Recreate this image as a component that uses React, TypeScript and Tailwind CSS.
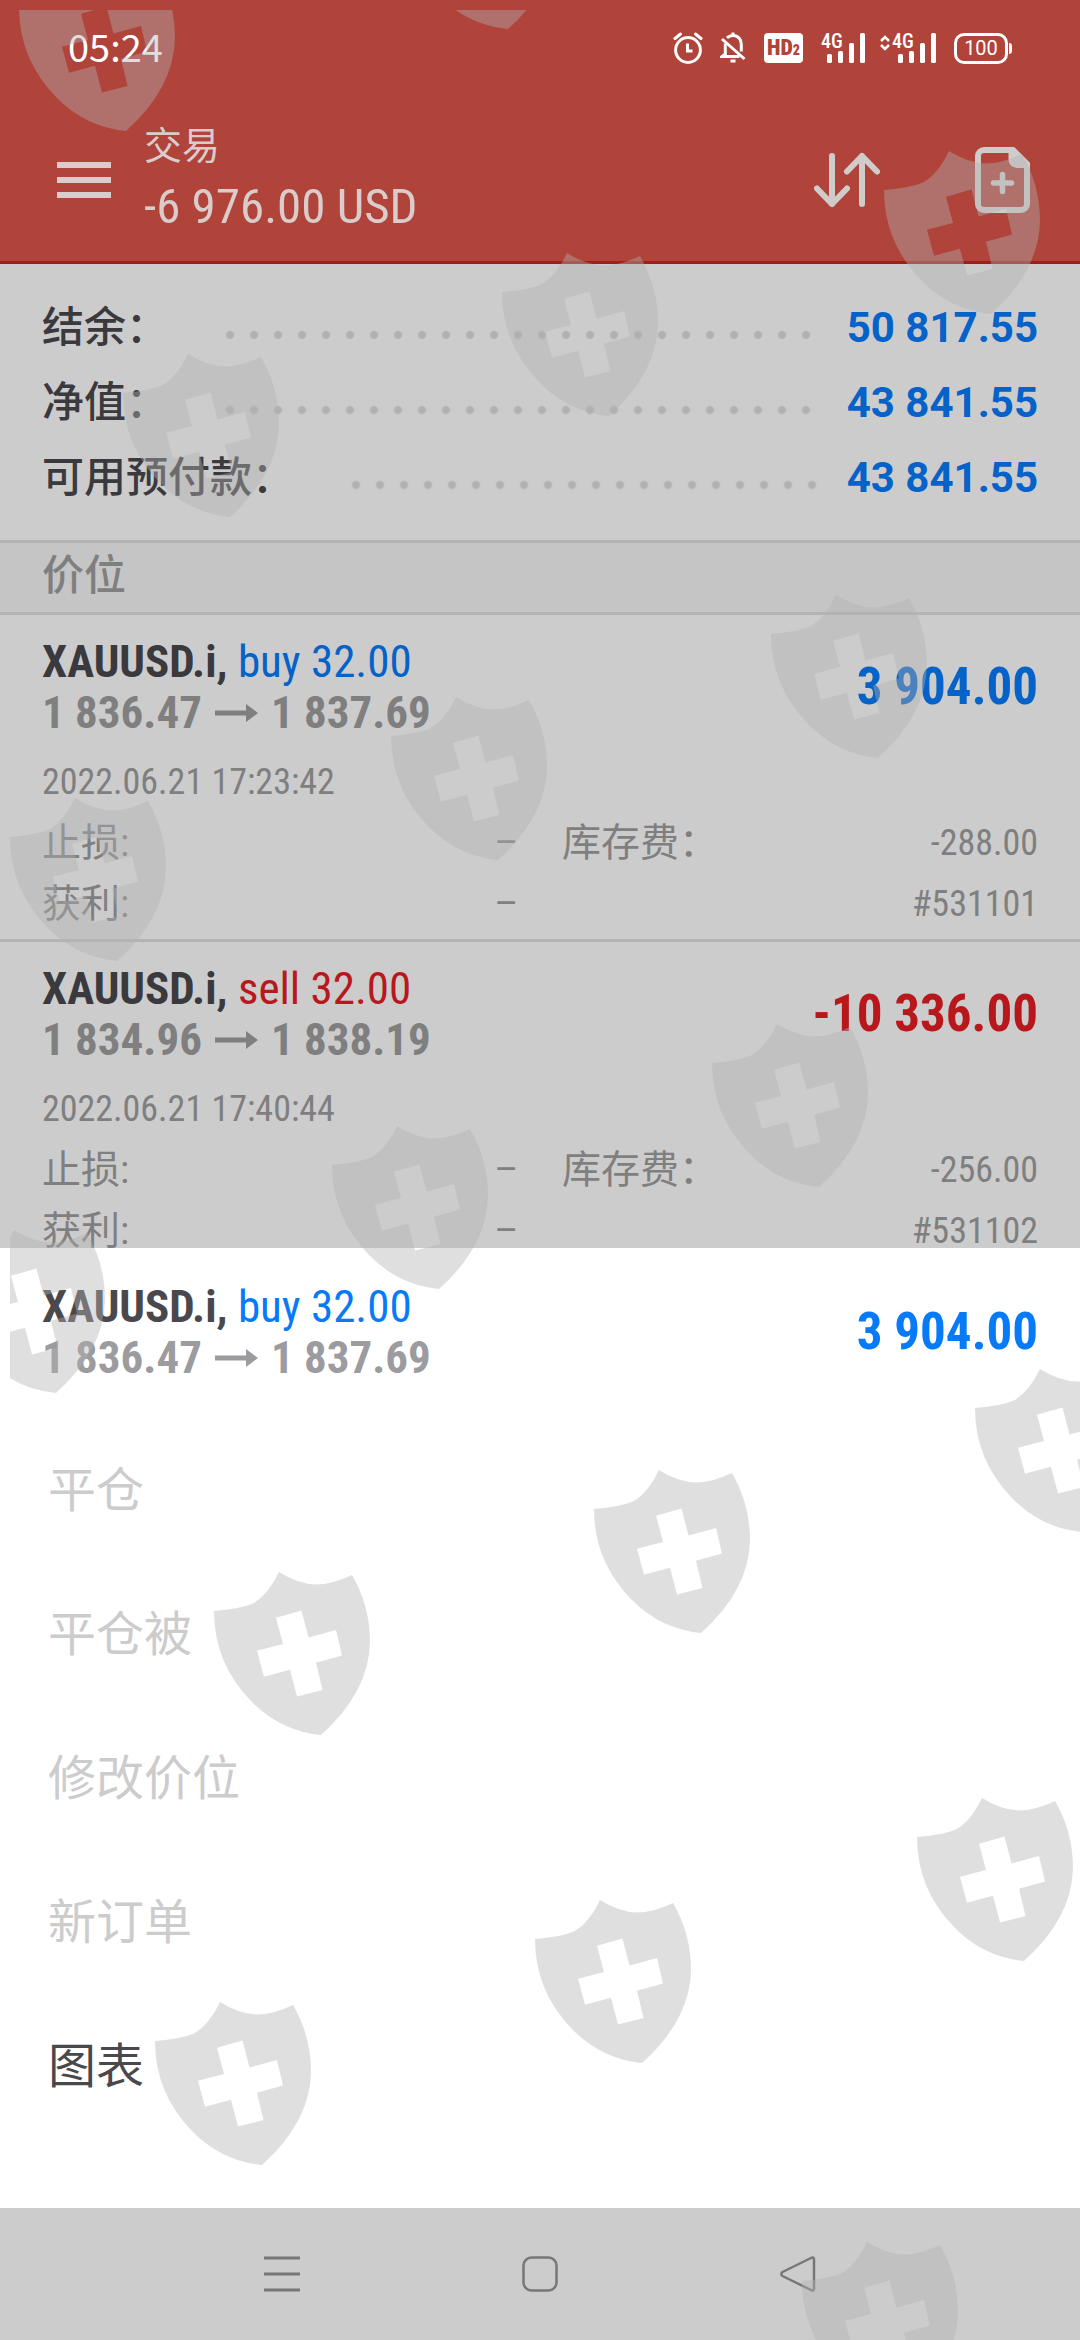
import React from 'react'

interface Position {
  id: string
  symbol: string
  side: 'buy' | 'sell'
  volume: string
  openPrice: string
  currentPrice: string
  profit: string
  time: string
  swap: string
}

const positions: Position[] = [
  {
    id: '531101',
    symbol: 'XAUUSD.i',
    side: 'buy',
    volume: '32.00',
    openPrice: '1 836.47',
    currentPrice: '1 837.69',
    profit: '3 904.00',
    time: '2022.06.21 17:23:42',
    swap: '-288.00',
  },
  {
    id: '531102',
    symbol: 'XAUUSD.i',
    side: 'sell',
    volume: '32.00',
    openPrice: '1 834.96',
    currentPrice: '1 838.19',
    profit: '-10 336.00',
    time: '2022.06.21 17:40:44',
    swap: '-256.00',
  },
]

const summary = [
  { label: '结余：', value: '50 817.55' },
  { label: '净值：', value: '43 841.55' },
  { label: '可用预付款：', value: '43 841.55' },
]

const menuItems = [
  { label: '平仓', enabled: false },
  { label: '平仓被', enabled: false },
  { label: '修改价位', enabled: false },
  { label: '新订单', enabled: false },
  { label: '图表', enabled: true },
]

const watermarks = [
  [9, -42], [391, -144], [874, 141], [492, 243], [113, 344], [761, 585],
  [381, 687], [0, 788], [702, 1014], [322, 1116], [-61, 1220], [965, 1359],
  [584, 1460], [204, 1562], [907, 1788], [525, 1890], [145, 1992], [792, 2232],
]

const SignalBars = () => (
  <svg className="h-[30px] w-[38px]" viewBox="0 0 38 30" fill="white">
    <rect x="0" y="21" width="5" height="9" rx="1.5" />
    <rect x="11" y="18" width="5" height="12" rx="1.5" />
    <rect x="22" y="10" width="5" height="20" rx="1.5" />
    <rect x="33" y="0" width="5" height="30" rx="1.5" />
  </svg>
)

const StatusBar = () => (
  <div className="flex h-24 items-center justify-between px-[68px] text-white">
    <span className="pb-1 font-['Noto_Sans_CJK_SC',sans-serif] text-[38px] leading-[40px]">05:24</span>
    <div className="flex items-center">
      <svg className="mr-[17px] h-8 w-[30px]" viewBox="0 0 30 32" fill="none" stroke="white" strokeWidth="3">
        <circle cx="15" cy="18" r="12.4" />
        <path d="M14.5 11.5v7.5h5" />
        <path d="M2 6.5 7.5 2M28 6.5 22.5 2" strokeLinecap="round" />
      </svg>
      <svg className="mr-[18px] h-8 w-[26px]" viewBox="0 0 26 32" fill="none" stroke="white" strokeWidth="3">
        <path d="M2 7 24.5 27" />
        <path d="M7 5.8C8.5 4.4 10.6 3.6 13 3.6c5 0 8.3 3.8 8.3 8.6v7.4" />
        <path d="M5.3 11.5v10.5L2 24.5h17.5" />
        <path d="M13 .5v3M10.5 29h5" />
      </svg>
      <span className="mr-[18px] flex h-[30px] w-[39px] items-center justify-center rounded-[4px] bg-white text-[22px] leading-[24px] font-black text-[#b0433a]">
        HD<span className="pt-1 text-[14px]">2</span>
      </span>
      <div className="relative mr-[15px] w-[44px] pl-[6px]">
        <SignalBars />
        <span className="absolute -top-1 left-0 text-[20px] leading-[24px] font-medium">4G</span>
      </div>
      <div className="relative mr-[18px] w-[56px] pl-[18px]">
        <SignalBars />
        <svg className="absolute top-0.5 left-0 h-4 w-[10px]" viewBox="0 0 10 16" fill="none" stroke="white" strokeWidth="2.5">
          <path d="M1 6 5 2l4 4M1 10l4 4 4-4" />
        </svg>
        <span className="absolute -top-1 left-3 text-[20px] leading-[24px] font-medium">4G</span>
      </div>
      <span className="flex h-[31px] w-[54px] items-center justify-center rounded-[10px] border-[3px] border-white font-[Roboto,sans-serif] text-[20px] leading-[24px]">
        100
      </span>
      <span className="ml-px h-[11px] w-[3px] rounded-r bg-white" />
    </div>
  </div>
)

const Header = () => (
  <header className="border-b-[3px] border-[#a01f17] bg-[#b0433a]">
    <StatusBar />
    <div className="flex h-[165px] items-center pr-[50px] pl-[57px] pt-[2px] text-[#dacccb]">
      <button aria-label="Menu" className="flex w-[54px] flex-col gap-[9px]">
        <span className="h-[6px] w-full bg-current" />
        <span className="h-[6px] w-full bg-current" />
        <span className="h-[6px] w-full bg-current" />
      </button>
      <div className="ml-[33px] flex-1">
        <h1 className="text-[38px] leading-[54px]">交易</h1>
        <p className="text-[49px] leading-[68px]">-6 976.00 USD</p>
      </div>
      <button aria-label="Sort">
        <svg className="h-[56px] w-[66px]" viewBox="0 0 66 56" fill="none" stroke="#cfcccb" strokeWidth="6" strokeLinecap="round" strokeLinejoin="round">
          <path d="M18 4v48M3 36.5 18 52l15-15.5" />
          <path d="M48 52V4M33 19.5 48 4l15 15.5" />
        </svg>
      </button>
      <button aria-label="New order" className="ml-[95px]">
        <svg className="h-[66px] w-[55px]" viewBox="0 0 55 66" fill="none" stroke="#cfcccb" strokeWidth="6" strokeLinecap="round">
          <path d="M9 3h29L52 17v40a6 6 0 0 1-6 6H9a6 6 0 0 1-6-6V9a6 6 0 0 1 6-6Z" />
          <path d="M33.5 3H40l12 12v6H42a8.5 8.5 0 0 1-8.5-8.5Z" fill="#cfcccb" stroke="none" />
          <path d="M27.5 27.5v17M18.5 36h18" strokeWidth="5.5" />
        </svg>
      </button>
    </div>
  </header>
)

const Summary = () => (
  <dl className="px-[42px] pt-[26px] pb-[25px] font-[Roboto,'Noto_Sans_CJK_SC',sans-serif] text-[42px] leading-[75px]">
    {summary.map((row) => (
      <div key={row.label} className="flex items-center">
        <dt className="font-medium text-[#3a393d]">{row.label}</dt>
        <span className="mt-[14px] mr-6 ml-[50px] h-6 flex-1 bg-[radial-gradient(circle,#b1b1b1_3px,transparent_5px)] bg-[length:24px_24px]" />
        <dd className="font-bold text-[#0462c8]">{row.value}</dd>
      </div>
    ))}
  </dl>
)

interface PositionHeadProps {
  position: Position
  dimmed?: boolean
}

const PositionHead: React.FC<PositionHeadProps> = ({ position, dimmed = false }) => {
  const buyColor = dimmed ? 'text-[#0462c8]' : 'text-[#077bf7]'
  const sideColor = position.side === 'buy' ? buyColor : 'text-[#b8171c]'

  return (
    <div className="flex justify-between">
      <div className="text-[45px] leading-[51px] font-bold">
        <p className={dimmed ? 'text-[#3a393d]' : 'text-[#49484c]'}>
          {position.symbol}, <span className={`font-normal ${sideColor}`}>{position.side} {position.volume}</span>
        </p>
        <p className={`flex items-center ${dimmed ? 'text-[#7f7f80]' : 'text-[#9c9ba0]'}`}>
          {position.openPrice}
          <svg className="mx-[13px] h-[18px] w-[43px]" viewBox="0 0 43 18" fill="currentColor">
            <path d="M0 6.5h31V0l12 9-12 9v-6.5H0Z" />
          </svg>
          {position.currentPrice}
        </p>
      </div>
      <p className={`pt-[19px] text-[51px] leading-[64px] font-bold ${sideColor}`}>{position.profit}</p>
    </div>
  )
}

const PositionRow: React.FC<{ position: Position }> = ({ position }) => (
  <li className="border-b-[3px] border-[#b4b4b4] px-[42px] pt-[21px] pb-[4px]">
    <PositionHead position={position} dimmed />
    <div className="pt-[14px] text-[36px] leading-[61px] text-[#7f7f80]">
      <p>{position.time}</p>
      <div className="grid grid-cols-[476px_1fr] gap-x-[44px]">
        <p className="flex justify-between">
          <span className="text-[39px]">止损:</span>
          <span className="font-[Roboto,sans-serif]">–</span>
        </p>
        <p className="flex justify-between">
          <span className="text-[39px]">库存费：</span>
          <span>{position.swap}</span>
        </p>
        <p className="flex justify-between">
          <span className="text-[39px]">获利:</span>
          <span className="font-[Roboto,sans-serif]">–</span>
        </p>
        <p className="text-right">#{position.id}</p>
      </div>
    </div>
  </li>
)

const ActionSheet: React.FC<{ position: Position }> = ({ position }) => (
  <section className="bg-white pb-[69px]">
    <div className="h-[171px] px-[42px] pt-[33px]">
      <PositionHead position={position} />
    </div>
    {menuItems.map((item) => (
      <button
        key={item.label}
        disabled={!item.enabled}
        className={`block h-36 w-full px-12 text-left text-[48px] leading-[72px] ${
          item.enabled ? 'text-[#49484c]' : 'text-[#cccccc]'
        }`}
      >
        {item.label}
      </button>
    ))}
  </section>
)

const NavigationBar = () => (
  <nav className="grid h-[132px] grid-cols-[1fr_222px_1fr] place-items-center px-[135px]">
    <button aria-label="Recent apps">
      <svg className="h-9 w-9" viewBox="0 0 36 36" stroke="#777" strokeWidth="3">
        <path d="M0 2h36M0 18h36M0 34h36" />
      </svg>
    </button>
    <button aria-label="Home">
      <svg className="h-9 w-9" viewBox="0 0 36 36" fill="none" stroke="#777" strokeWidth="2.5">
        <rect x="1.5" y="1.5" width="33" height="33" rx="8" />
      </svg>
    </button>
    <button aria-label="Back">
      <svg className="h-9 w-9" viewBox="0 0 36 36" fill="none" stroke="#777" strokeWidth="2.5" strokeLinejoin="round">
        <path d="M2.5 16 31 2q3-1.3 3 1.5v29q0 2.8-3 1.5L2.5 20q-2.5-2 0-4Z" />
      </svg>
    </button>
  </nav>
)

const Watermark = () => (
  <div className="pointer-events-none absolute top-[10px] right-0 bottom-0 left-[10px] overflow-hidden">
    <svg className="h-full w-full" fill="#b2b2b2" fillOpacity="0.41" fillRule="evenodd">
      {watermarks.map(([x, y]) => (
        <path
          key={`${x}:${y}`}
          transform={`translate(${x} ${y})`}
          d="M0 39Q26 37 39 31.5Q54 23 65 0Q84 12 102 12.5Q118 12.5 138 3Q156 34 156 70Q155 120 107 163Q66 159 37 129Q0 91 0 39ZM62 45.7 87.5 38.5 94.5 65.5 122 58 128 83.5 102 90.7 108.5 118 83 124.5 76 97.7 50 104.7 43 78.7 69 72Z"
        />
      ))}
    </svg>
  </div>
)

export default function App() {
  return (
    <div className="relative flex h-screen flex-col overflow-hidden bg-[#cccccc] font-['Roboto_Condensed','Liberation_Sans_Narrow','Noto_Sans_CJK_SC',sans-serif]">
      <Header />
      <main className="min-h-0 flex-1 overflow-hidden">
        <Summary />
        <h2 className="border-y-[3px] border-[#b4b4b4] bg-[#c5c5c5] px-[42px] pb-[4px] text-[42px] leading-[65px] font-medium text-[#7f7f80]">
          价位
        </h2>
        <ul>
          {positions.map((position) => (
            <PositionRow key={position.id} position={position} />
          ))}
        </ul>
      </main>
      <ActionSheet position={positions[0]} />
      <NavigationBar />
      <Watermark />
    </div>
  )
}
